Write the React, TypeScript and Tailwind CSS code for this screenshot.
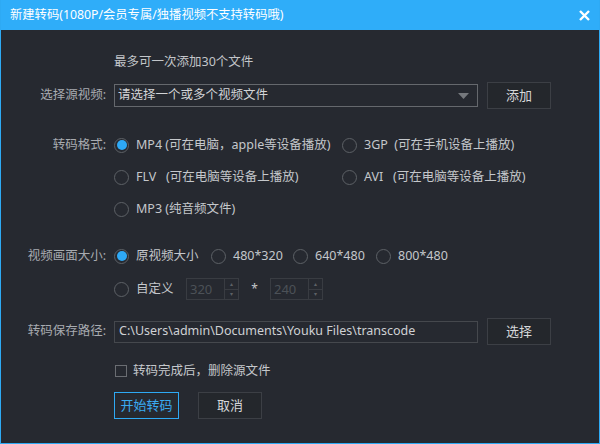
import React from 'react';

const font = { fontFamily: '"Noto Sans", "Noto Sans CJK SC", sans-serif' };

function Radio({ checked }: { checked?: boolean }) {
    return (
        <span className="w-[15px] h-[15px] rounded-full border-[1.5px] border-[#5d6166] flex items-center justify-center shrink-0">
            {checked && <span className="w-[10px] h-[10px] rounded-full bg-[#2ea9f6]" />}
        </span>
    );
}

function Option({ checked, text, w }: { checked?: boolean; text: React.ReactNode; w: string }) {
    return (
        <div className={`flex items-center gap-[7px] ${w}`}>
            <Radio checked={checked} />
            <span className="text-[12.5px] text-[#c4c7cb] whitespace-pre">{text}</span>
        </div>
    );
}

function Spin({ value }: { value: string }) {
    return (
        <div className="flex w-[53px] h-[22px] border border-[#393c42]">
            <span className="flex-1 pl-[3px] text-[13px] text-[#4c5157] leading-[20px]">{value}</span>
            <div className="w-[14px] flex flex-col border-l border-[#393c42]">
                <div className="flex-1 flex items-center justify-center border-b border-[#393c42] text-[#5d6166] text-[6px] leading-none">▴</div>
                <div className="flex-1 flex items-center justify-center text-[#5d6166] text-[6px] leading-none">▾</div>
            </div>
        </div>
    );
}

export default function App() {
    const label = 'w-[106px] text-right text-[12.5px] text-[#a8abb0] shrink-0 pr-[1px]';
    return (
        <div className="w-[600px] h-[444px] bg-[#262930] flex flex-col border-x border-b border-[#2eaaf4] overflow-hidden" style={font}>
            {/* 标题栏 */}
            <div className="h-[30px] -mx-px bg-[#2fadf9] flex items-center justify-between pl-[10px] pr-[9px] shrink-0">
                <span className="text-[12.3px] text-white">新建转码(1080P/会员专属/独播视频不支持转码哦)</span>
                <svg width="13" height="13" viewBox="0 0 13 13">
                    <path d="M2 2 L11 11 M11 2 L2 11" stroke="#fff" strokeWidth="2.4" />
                </svg>
            </div>

            <div className="flex flex-col">
                <div className="mt-[24px] h-[16px] flex items-center pl-[113px] text-[12.5px] text-[#c2c5c9]">最多可一次添加30个文件</div>

                {/* 选择源视频 */}
                <div className="mt-[12px] h-[27px] flex items-center">
                    <span className={label}>选择源视频:</span>
                    <div className="ml-[7px] w-[364px] h-[23px] border border-[#65686d] flex items-center justify-between pl-[3px] pr-[8px]">
                        <span className="text-[12.5px] text-[#d2d4d7]">请选择一个或多个视频文件</span>
                        <svg width="11" height="6" viewBox="0 0 11 6"><path d="M0 0 H11 L5.5 6 Z" fill="#75787d" /></svg>
                    </div>
                    <button className="ml-[9px] w-[64px] h-[27px] bg-[#24272c] border border-[#3c3f45] text-[13px] text-[#d6d8da]">添加</button>
                </div>

                {/* 转码格式 */}
                <div className="mt-[20px] h-[32px] flex items-center">
                    <span className={label}>转码格式:</span>
                    <div className="ml-[7px] flex items-center">
                        <Option checked w="w-[228px]" text="MP4 (可在电脑，apple等设备播放)" />
                        <Option w="w-[200px]" text="3GP  (可在手机设备上播放)" />
                    </div>
                </div>
                <div className="h-[32px] flex items-center">
                    <span className={label}></span>
                    <div className="ml-[7px] flex items-center">
                        <Option w="w-[228px]" text="FLV   (可在电脑等设备上播放)" />
                        <Option w="w-[200px]" text="AVI   (可在电脑等设备上播放)" />
                    </div>
                </div>
                <div className="h-[32px] flex items-center">
                    <span className={label}></span>
                    <div className="ml-[7px] flex items-center">
                        <Option w="w-[228px]" text="MP3 (纯音频文件)" />
                    </div>
                </div>

                {/* 视频画面大小 */}
                <div className="mt-[15px] h-[32px] flex items-center">
                    <span className={label}>视频画面大小:</span>
                    <div className="ml-[7px] flex items-center">
                        <Option checked w="w-[97px]" text="原视频大小" />
                        <Option w="w-[82px]" text="480*320" />
                        <Option w="w-[83px]" text="640*480" />
                        <Option w="w-[90px]" text="800*480" />
                    </div>
                </div>
                <div className="h-[34px] flex items-center">
                    <span className={label}></span>
                    <div className="ml-[7px] flex items-center">
                        <Option w="w-[72px]" text="自定义" />
                        <Spin value="320" />
                        <span className="w-[31px] text-center text-[12px] text-[#c4c7cb]">*</span>
                        <Spin value="240" />
                    </div>
                </div>

                {/* 转码保存路径 */}
                <div className="mt-[12px] h-[27px] flex items-center">
                    <span className={label}>转码保存路径:</span>
                    <div className="ml-[7px] w-[364px] h-[22px] border border-[#45484d] flex items-center pl-[4px]">
                        <span className="text-[12.5px] text-[#cfd1d4]">C:\Users\admin\Documents\Youku Files\transcode</span>
                    </div>
                    <button className="ml-[9px] w-[64px] h-[27px] bg-[#24272c] border border-[#3c3f45] text-[13px] text-[#d6d8da]">选择</button>
                </div>

                {/* 删除源文件 */}
                <div className="mt-[16px] h-[20px] flex items-center pl-[114px] gap-[6px]">
                    <span className="w-[12px] h-[12px] border border-[#6a6d72]" />
                    <span className="text-[12.5px] text-[#c4c7cb]">转码完成后，删除源文件</span>
                </div>

                {/* 按钮 */}
                <div className="mt-[11px] flex items-center pl-[113px] gap-[19px]">
                    <button className="w-[65px] h-[27px] border border-[#2ea9f4] text-[13px] text-[#3aaaf0]">开始转码</button>
                    <button className="w-[64px] h-[27px] bg-[#24272c] border border-[#3c3f45] text-[13px] text-[#d6d8da]">取消</button>
                </div>
            </div>
        </div>
    );
}
